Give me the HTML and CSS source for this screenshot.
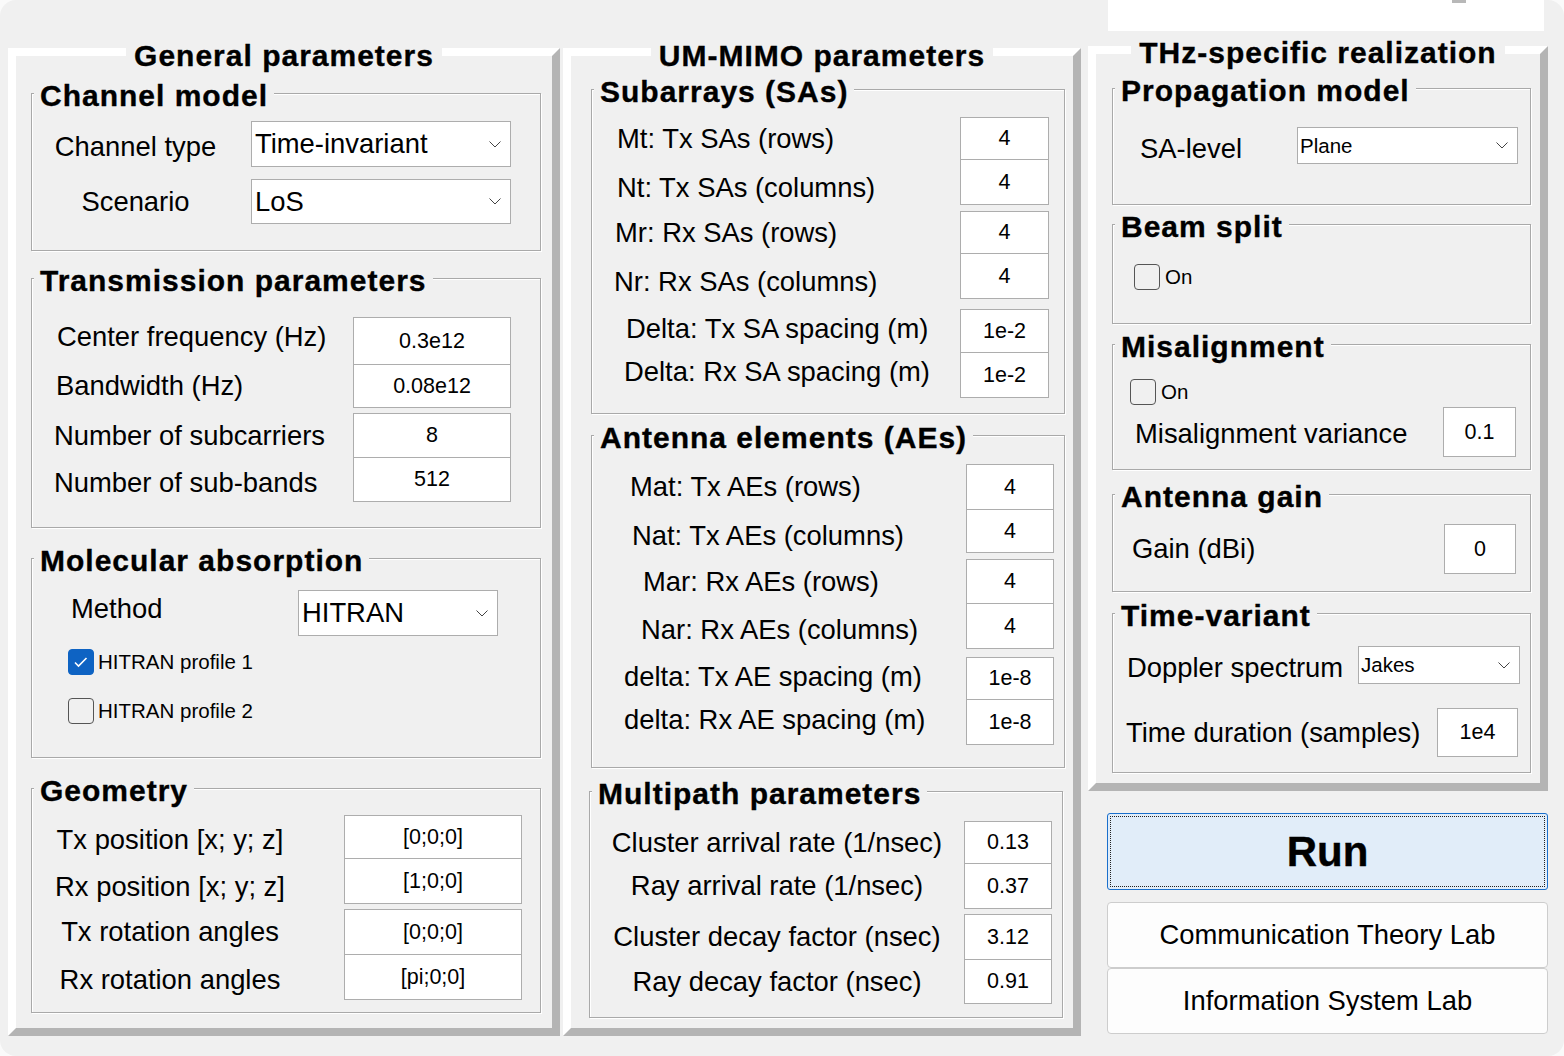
FILE: index.html
```html
<!DOCTYPE html>
<html>
<head>
<meta charset="utf-8">
<link rel="stylesheet" href="styles.css">
</head>
<body>
<div class="app">

  <!-- Column 1 -->
  <section class="outer col1">
    <div class="outer-title">General parameters</div>

    <div class="group g-chan">
      <div class="gtitle">Channel model</div>
      <div class="row m8 h46">
        <div class="lbl lc dn3">Channel type</div>
        <div class="dd big"><span>Time-invariant</span><svg class="chev" width="12" height="7" viewBox="0 0 12 7"><polyline points="0.5,0.5 6,6 11.5,0.5" fill="none" stroke="#444" stroke-width="1"/></svg></div>
      </div>
      <div class="row m12 h45">
        <div class="lbl lc">Scenario</div>
        <div class="dd big"><span>LoS</span><svg class="chev" width="12" height="7" viewBox="0 0 12 7"><polyline points="0.5,0.5 6,6 11.5,0.5" fill="none" stroke="#444" stroke-width="1"/></svg></div>
      </div>
    </div>

    <div class="group g-trans">
      <div class="gtitle">Transmission parameters</div>
      <div class="row m19 h48">
        <div class="lbl i25 up4">Center frequency (Hz)</div>
        <div class="val">0.3e12</div>
      </div>
      <div class="row m-1 h44">
        <div class="lbl i24">Bandwidth (Hz)</div>
        <div class="val">0.08e12</div>
      </div>
      <div class="row m5 h45">
        <div class="lbl i22">Number of subcarriers</div>
        <div class="val">8</div>
      </div>
      <div class="row m-1 h45">
        <div class="lbl i22 dn3">Number of sub-bands</div>
        <div class="val">512</div>
      </div>
    </div>

    <div class="group g-mol">
      <div class="gtitle">Molecular absorption</div>
      <div class="row m12 h46">
        <div class="lbl lm up4">Method</div>
        <div class="dd big"><span>HITRAN</span><svg class="chev" width="12" height="7" viewBox="0 0 12 7"><polyline points="0.5,0.5 6,6 11.5,0.5" fill="none" stroke="#444" stroke-width="1"/></svg></div>
      </div>
      <div class="row m13 h26">
        <div class="cb checked i36"><svg width="26" height="26" viewBox="0 0 26 26"><polyline points="7,13.5 10.5,17 18.5,9" fill="none" stroke="#fff" stroke-width="1.6"/></svg></div>
        <div class="cbtext">HITRAN profile 1</div>
      </div>
      <div class="row m23 h26">
        <div class="cb i36"></div>
        <div class="cbtext">HITRAN profile 2</div>
      </div>
    </div>

    <div class="group g-geo">
      <div class="gtitle">Geometry</div>
      <div class="row m7 h44">
        <div class="lbl lc dn3">Tx position [x; y; z]</div>
        <div class="val">[0;0;0]</div>
      </div>
      <div class="row m-1 h46">
        <div class="lbl lc dn6">Rx position [x; y; z]</div>
        <div class="val">[1;0;0]</div>
      </div>
      <div class="row m5 h46">
        <div class="lbl lc">Tx rotation angles</div>
        <div class="val">[0;0;0]</div>
      </div>
      <div class="row m-1 h46">
        <div class="lbl lc dn3">Rx rotation angles</div>
        <div class="val">[pi;0;0]</div>
      </div>
    </div>
  </section>

  <!-- Column 2 -->
  <section class="outer col2">
    <div class="outer-title">UM-MIMO parameters</div>

    <div class="group g-sa">
      <div class="gtitle">Subarrays (SAs)</div>
      <div class="row m8 h43">
        <div class="lbl i25">Mt: Tx SAs (rows)</div>
        <div class="val">4</div>
      </div>
      <div class="row m-1 h46">
        <div class="lbl i25 dn6">Nt: Tx SAs (columns)</div>
        <div class="val">4</div>
      </div>
      <div class="row m6 h43">
        <div class="lbl i23">Mr: Rx SAs (rows)</div>
        <div class="val">4</div>
      </div>
      <div class="row m-1 h46">
        <div class="lbl i22 dn6">Nr: Rx SAs (columns)</div>
        <div class="val">4</div>
      </div>
      <div class="row m10 h44">
        <div class="lbl i34 up2">Delta: Tx SA spacing (m)</div>
        <div class="val">1e-2</div>
      </div>
      <div class="row m-1 h46">
        <div class="lbl i32 up3">Delta: Rx SA spacing (m)</div>
        <div class="val">1e-2</div>
      </div>
    </div>

    <div class="group g-ae">
      <div class="gtitle">Antenna elements (AEs)</div>
      <div class="row m9 h46">
        <div class="lbl i38">Mat: Tx AEs (rows)</div>
        <div class="val">4</div>
      </div>
      <div class="row m-1 h44">
        <div class="lbl i40 dn5">Nat: Tx AEs (columns)</div>
        <div class="val">4</div>
      </div>
      <div class="row m6 h45">
        <div class="lbl i51">Mar: Rx AEs (rows)</div>
        <div class="val">4</div>
      </div>
      <div class="row m-1 h46">
        <div class="lbl i49 dn4">Nar: Rx AEs (columns)</div>
        <div class="val">4</div>
      </div>
      <div class="row m8 h43">
        <div class="lbl i32 up2">delta: Tx AE spacing (m)</div>
        <div class="val">1e-8</div>
      </div>
      <div class="row m-1 h46">
        <div class="lbl i32 up2">delta: Rx AE spacing (m)</div>
        <div class="val">1e-8</div>
      </div>
    </div>

    <div class="group g-mp">
      <div class="gtitle">Multipath parameters</div>
      <div class="row m10 h43">
        <div class="lbl lc">Cluster arrival rate (1/nsec)</div>
        <div class="val">0.13</div>
      </div>
      <div class="row m-1 h46">
        <div class="lbl lc">Ray arrival rate (1/nsec)</div>
        <div class="val">0.37</div>
      </div>
      <div class="row m5 h46">
        <div class="lbl lc">Cluster decay factor (nsec)</div>
        <div class="val">3.12</div>
      </div>
      <div class="row m-1 h45">
        <div class="lbl lc">Ray decay factor (nsec)</div>
        <div class="val">0.91</div>
      </div>
    </div>
  </section>

  <!-- Column 3 -->
  <div class="col3">
    <div class="img-box"><div class="img-mark"></div></div>

    <section class="outer thz">
      <div class="outer-title">THz-specific realization</div>

      <div class="group g-prop">
        <div class="gtitle">Propagation model</div>
        <div class="row m19 h37">
          <div class="lbl lp dn3">SA-level</div>
          <div class="dd small"><span>Plane</span><svg class="chev" width="12" height="7" viewBox="0 0 12 7"><polyline points="0.5,0.5 6,6 11.5,0.5" fill="none" stroke="#444" stroke-width="1"/></svg></div>
        </div>
      </div>

      <div class="group g-beam">
        <div class="gtitle">Beam split</div>
        <div class="row m20 h26">
          <div class="cb i21"></div>
          <div class="cbtext on">On</div>
        </div>
      </div>

      <div class="group g-mis">
        <div class="gtitle">Misalignment</div>
        <div class="row m15 h26">
          <div class="cb i17"></div>
          <div class="cbtext on">On</div>
        </div>
        <div class="row m2 h50">
          <div class="lbl i22 dn2">Misalignment variance</div>
          <div class="val">0.1</div>
        </div>
      </div>

      <div class="group g-gain">
        <div class="gtitle">Antenna gain</div>
        <div class="row m10 h50">
          <div class="lbl i19">Gain (dBi)</div>
          <div class="val">0</div>
        </div>
      </div>

      <div class="group g-tv">
        <div class="gtitle">Time-variant</div>
        <div class="row m13 h38">
          <div class="lbl ld dn3">Doppler spectrum</div>
          <div class="dd small"><span>Jakes</span><svg class="chev" width="12" height="7" viewBox="0 0 12 7"><polyline points="0.5,0.5 6,6 11.5,0.5" fill="none" stroke="#444" stroke-width="1"/></svg></div>
        </div>
        <div class="row m24 h49">
          <div class="lbl i13">Time duration (samples)</div>
          <div class="val">1e4</div>
        </div>
      </div>
    </section>

    <button class="btn run">Run</button>
    <button class="btn lab first">Communication Theory Lab</button>
    <button class="btn lab">Information System Lab</button>
  </div>

</div>
</body>
</html>
```

FILE: styles.css
```css
* { box-sizing: border-box; }
html, body { margin: 0; padding: 0; }
body {
  background: #fafafa;
  font-family: "Liberation Sans", Arial, sans-serif;
  color: #000;
}
.app {
  width: 1564px;
  height: 1056px;
  background: #f0f0f0;
  border-radius: 16px;
  display: flex;
  align-items: flex-start;
  overflow: hidden;
}

/* Outer beveled panels */
.outer {
  border: 8px solid;
  border-color: #fff #b4b4b4 #b4b4b4 #fff;
  display: flex;
  flex-direction: column;
  align-items: flex-start;
}
.col1 { margin: 48px 0 0 8px; width: 552px; height: 988px; }
.col2 { margin: 48px 0 0 3px; width: 518px; height: 988px; }
.col3 { margin-left: 7px; width: 460px; display: flex; flex-direction: column; }
.thz { width: 460px; height: 745px; margin-top: 15px; }

.outer-title {
  align-self: center;
  margin-top: -17px;
  padding: 0 8px;
  height: 34px;
  line-height: 34px;
  background: #f0f0f0;
  font-weight: bold;
  font-size: 30px;
  letter-spacing: 1px;
  white-space: nowrap;
  -webkit-text-stroke: 0.35px #000;
}
.thz .outer-title { margin-top: -18px; }

/* Etched groups */
.group {
  border: 1px solid #a9a9a9;
  box-shadow: inset 1px 1px 0 #fff, 1px 1px 0 #fff;
  display: flex;
  flex-direction: column;
}
.gtitle {
  align-self: flex-start;
  margin: -15px 0 0 2px;
  padding: 0 6px;
  height: 34px;
  line-height: 34px;
  background: #f0f0f0;
  font-weight: bold;
  font-size: 30px;
  letter-spacing: 1px;
  white-space: nowrap;
  -webkit-text-stroke: 0.35px #000;
}

.col1 .group { width: 510px; margin-left: 15px; }
.g-chan { margin-top: 20px; height: 158px; }
.g-trans { margin-top: 27px; height: 250px; }
.g-mol { margin-top: 30px; height: 200px; }
.g-geo { margin-top: 30px; height: 225px; }

.col2 .group { width: 474px; margin-left: 20px; }
.g-sa { margin-top: 16px; height: 325px; }
.g-ae { margin-top: 21px; height: 333px; }
.col2 .g-mp { margin-top: 23px; height: 227px; margin-left: 18px; }

.thz .group { width: 419px; margin-left: 16px; }
.g-prop { margin-top: 18px; height: 117px; }
.g-beam { margin-top: 19px; height: 100px; }
.g-mis { margin-top: 20px; height: 126px; }
.g-gain { margin-top: 24px; height: 98px; }
.g-tv { margin-top: 21px; height: 160px; }

/* Rows */
.row { display: flex; align-items: center; flex: none; }
.m-1 { margin-top: -1px; }
.m2 { margin-top: 2px; }
.m5 { margin-top: 5px; }
.m6 { margin-top: 6px; }
.m7 { margin-top: 7px; }
.m8 { margin-top: 8px; }
.m9 { margin-top: 9px; }
.m10 { margin-top: 10px; }
.m12 { margin-top: 12px; }
.m13 { margin-top: 13px; }
.m15 { margin-top: 15px; }
.m19 { margin-top: 19px; }
.m20 { margin-top: 20px; }
.m23 { margin-top: 23px; }
.m24 { margin-top: 24px; }
.h26 { height: 26px; }
.h37 { height: 37px; }
.h38 { height: 38px; }
.h43 { height: 43px; }
.h44 { height: 44px; }
.h45 { height: 45px; }
.h46 { height: 46px; }
.h48 { height: 48px; }
.h49 { height: 49px; }
.h50 { height: 50px; }

.lbl { font-size: 27.4px; white-space: nowrap; flex: none; }
.i13 { margin-left: 13px; }
.i17 { margin-left: 17px; }
.i19 { margin-left: 19px; }
.i21 { margin-left: 21px; }
.i22 { margin-left: 22px; }
.i23 { margin-left: 23px; }
.i24 { margin-left: 24px; }
.i25 { margin-left: 25px; }
.i32 { margin-left: 32px; }
.i34 { margin-left: 34px; }
.i36 { margin-left: 36px; }
.i38 { margin-left: 38px; }
.i40 { margin-left: 40px; }
.i49 { margin-left: 49px; }
.i51 { margin-left: 51px; }

.dn2 { padding-top: 3px; }
.dn3 { padding-top: 6px; }
.dn4 { padding-top: 8px; }
.dn5 { padding-top: 10px; }
.dn6 { padding-top: 12px; }
.up2 { padding-bottom: 4px; }
.up3 { padding-bottom: 6px; }
.up4 { padding-bottom: 8px; }

/* centered label boxes */
.lc { text-align: center; }
.g-chan .lc { width: 189px; margin-left: 9px; }
.g-geo .lc { width: 252px; margin-left: 12px; }
.g-mp .lc { width: 354px; margin-left: 10px; }
.lm { margin-left: 39px; }
.lp { margin-left: 27px; }
.ld { margin-left: 14px; }

/* Value boxes */
.val {
  margin-left: auto;
  height: 100%;
  border: 1px solid #adadad;
  background: #fff;
  display: flex;
  align-items: center;
  justify-content: center;
  font-size: 21.5px;
  flex: none;
}
.g-trans .val { width: 158px; margin-right: 29px; }
.g-geo .val { width: 178px; margin-right: 18px; }
.g-sa .val { width: 89px; margin-right: 15px; }
.g-ae .val { width: 88px; margin-right: 10px; }
.g-mp .val { width: 88px; margin-right: 10px; }
.g-mis .val { width: 73px; margin-right: 14px; }
.g-gain .val { width: 72px; margin-right: 14px; }
.g-tv .val { width: 81px; margin-right: 12px; }

/* Dropdowns */
.dd {
  margin-left: auto;
  height: 100%;
  border: 1px solid #adadad;
  background: #fff;
  display: flex;
  align-items: center;
  padding-left: 3px;
  flex: none;
  white-space: nowrap;
}
.dd.big { font-size: 27.4px; }
.dd.small { font-size: 20.5px; padding-left: 2px; }
.chev { margin-left: auto; margin-right: 9px; flex: none; }
.g-chan .dd { width: 260px; margin-right: 29px; }
.g-mol .dd { width: 200px; margin-right: 42px; }
.g-prop .dd { width: 221px; margin-right: 12px; }
.g-tv .dd { width: 162px; margin-right: 10px; }

/* Checkboxes */
.cb {
  width: 26px;
  height: 26px;
  border: 1.5px solid #555;
  border-radius: 4px;
  flex: none;
}
.cb.checked {
  background: #0e63c3;
  border-color: #0e63c3;
}
.cb svg { display: block; margin: -1.5px; }
.cbtext { font-size: 20.5px; margin-left: 4px; white-space: nowrap; }
.cbtext.on { margin-left: 5px; }

/* Column 3 extras */
.img-box {
  margin-left: 20px;
  width: 436px;
  height: 31px;
  background: #fff;
  display: flex;
}
.img-mark {
  margin-left: 344px;
  width: 14px;
  height: 3px;
  background: #b8b8b8;
}

.btn {
  font-family: "Liberation Sans", Arial, sans-serif;
  color: #000;
  margin: 0 0 0 19px;
  width: 441px;
  padding: 0;
  cursor: default;
}
.run {
  margin-top: 22px;
  height: 77px;
  background: #e1edf9;
  border: 1px solid #1a6fcc;
  border-radius: 3px;
  outline: 1px dotted #222;
  outline-offset: -4px;
  font-size: 42px;
  font-weight: bold;
  -webkit-text-stroke: 0.4px #000;
}
.lab {
  height: 66px;
  background: #fdfdfd;
  border: 1px solid #cdcdcd;
  border-radius: 4px;
  font-size: 27.4px;
}
.lab.first { margin-top: 12px; }
```
